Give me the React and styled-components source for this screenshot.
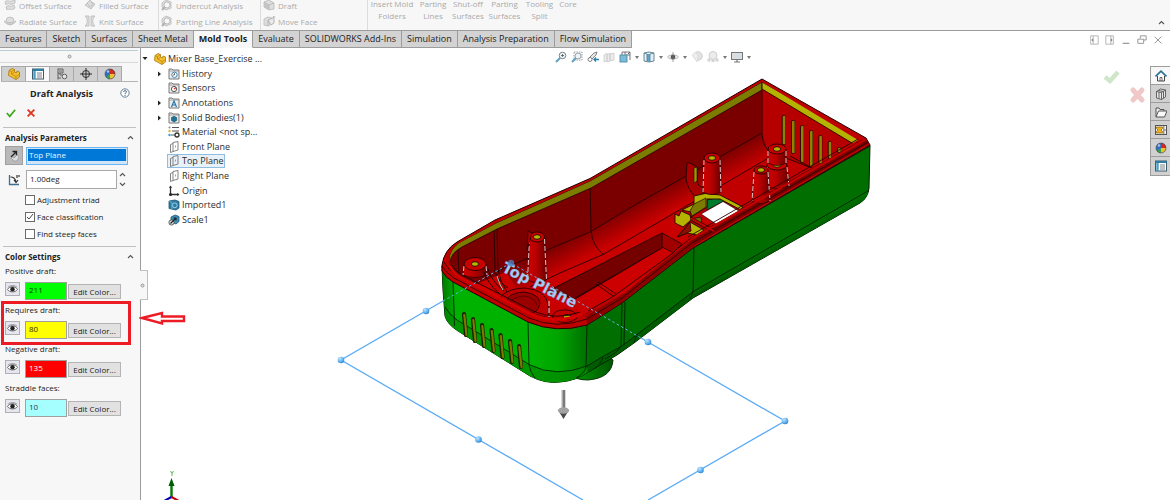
import React, { useState } from 'react';
import styled, { createGlobalStyle, css } from 'styled-components';

const GlobalStyle = createGlobalStyle`
  * {
    box-sizing: border-box;
  }

  body {
    margin: 0;
    background: #ffffff;
    color: #222222;
    font-family: 'Open Sans', 'Noto Sans', sans-serif;
    font-size: 8px;
    overflow: hidden;
  }

  button, input {
    font-family: inherit;
    font-size: inherit;
    color: inherit;
  }

  svg {
    display: block;
    flex: none;
  }
`;

const Page = styled.div`
  display: flex;
  flex-direction: column;
  height: 100vh;
`;

/* ---------- ribbon ---------- */

const Ribbon = styled.header`
  display: flex;
  align-items: flex-end;
  height: 31px;
  overflow: hidden;
  background: #f7f7f7;
  border-bottom: 1px solid #9c9c9c;
  color: #aaaaaa;
`;

const RibbonGroup = styled.div`
  display: grid;
  grid-template-columns: ${(props) => props.$cols};
  grid-auto-rows: 16px;
  height: 33px;
  padding-left: ${(props) => props.$pad || 2}px;
  border-right: 1px solid #dcdcdc;
`;

const RibbonButton = styled.button`
  display: flex;
  align-items: center;
  gap: 3px;
  padding: 0;
  border: none;
  background: none;
  white-space: nowrap;
`;

const BigTools = styled.div`
  display: flex;
  align-items: flex-start;
  align-self: flex-start;
`;

const BigTool = styled.button`
  display: flex;
  flex-direction: column;
  align-items: center;
  gap: 4px;
  width: ${(props) => props.$width}px;
  padding: 0;
  border: none;
  background: none;
  line-height: 8px;
  white-space: nowrap;
`;

const RibbonToggle = styled.button`
  margin: 0 5px 5px auto;
  padding: 0;
  border: none;
  background: none;
`;

/* ---------- command tabs ---------- */

const TabBar = styled.nav`
  display: flex;
  justify-content: space-between;
  height: 17px;
`;

const TabList = styled.div`
  display: flex;
`;

const Tab = styled.button`
  padding: 0 5px;
  border: none;
  border-right: 1px solid #9c9c9c;
  border-bottom: 1px solid #9c9c9c;
  background: #d3d3d3;
  font-size: 9px;
  line-height: 16px;
  white-space: nowrap;

  ${(props) => props.$active && css`
    border-bottom-color: #f7f7f7;
    background: #f7f7f7;
    font-weight: 700;
  `}
`;

const WindowControls = styled.div`
  display: flex;
  align-items: center;
  gap: 6px;
  padding-right: 7px;
`;

const PlainButton = styled.button`
  padding: 0;
  border: none;
  background: none;
`;

/* ---------- property manager ---------- */

const Main = styled.main`
  display: flex;
  flex: 1;
  min-height: 0;
`;

const Panel = styled.aside`
  position: relative;
  z-index: 2;
  flex: none;
  width: 141px;
  border-right: 1px solid #9c9c9c;
  background: #f7f7f7;
`;

const Grip = styled.div`
  display: flex;
  align-items: center;
  justify-content: center;
  height: 13px;
  margin: 2px 2px 0 0;
  border-top: 1px solid #b9cdd2;
  border-bottom: 1px solid #d8d8d8;
`;

const PanelTabs = styled.div`
  display: flex;
  margin: 3px 2px 0 1px;
  border-bottom: 1px solid #b4b4b4;
`;

const PanelTab = styled.button`
  display: flex;
  align-items: center;
  justify-content: center;
  width: 25px;
  height: 15px;
  margin-right: -1px;
  padding: 0;
  border: 1px solid #a8a8a8;
  border-bottom: none;
  background: ${(props) => (props.$active ? '#f9f9f9' : '#cfcfcf')};
`;

const TitleRow = styled.div`
  display: flex;
  align-items: center;
  height: 22px;
  padding: 0 10px 0 30px;
`;

const Title = styled.h1`
  flex: 1;
  margin: 0;
  font-size: 9px;
`;

const ConfirmRow = styled.div`
  display: flex;
  align-items: center;
  gap: 10px;
  height: 18px;
  padding-left: 6px;
`;

const Section = styled.section`
  margin: ${(props) => props.$top}px 4px 0 3px;
  border-top: 1px solid #c0c0c0;
`;

const SectionTitle = styled.h2`
  display: flex;
  align-items: center;
  justify-content: space-between;
  height: 18px;
  margin: 0;
  padding: 0 2px;
  font-size: 8px;
`;

const ParamRow = styled.div`
  display: flex;
  align-items: center;
  height: 19px;
  margin-bottom: ${(props) => props.$gap}px;
  padding: 0 8px 0 2px;
`;

const IconCell = styled.label`
  display: flex;
  align-items: center;
  justify-content: center;
  width: 18px;
  height: 19px;
  margin-right: 3px;
  border: 1px solid ${(props) => (props.$pressed ? '#a0a0a0' : 'transparent')};
  background: ${(props) => (props.$pressed ? '#b9b9b9' : 'none')};
`;

const SelectionBox = styled.div`
  display: flex;
  flex: 1;
  height: 18px;
  border: 1px solid #6db5f0;
  background: #cfe4f7;
  padding: 1px 1px 3px;
`;

const SelectionInput = styled.input`
  width: 100%;
  padding: 0 1px;
  border: none;
  background: #0078d7;
  color: #e8f3fd;
`;

const AngleInput = styled.input`
  flex: 1;
  width: 0;
  height: 19px;
  padding: 0 3px 3px;
  border: 1px solid #a8a8a8;
  background: #ffffff;
`;

const Spinner = styled.div`
  display: flex;
  flex-direction: column;
  align-items: center;
  justify-content: space-between;
  width: 11px;
  height: 15px;
`;

const CheckLabel = styled.label`
  display: flex;
  align-items: center;
  gap: 2px;
  height: 17px;
  padding-left: 22px;
`;

const CheckBox = styled.input`
  appearance: none;
  width: 10px;
  height: 10px;
  margin: 0;
  border: 1px solid #6a6a6a;
  background: #ffffff;

  &:checked {
    background: #ffffff url("data:image/svg+xml,%3Csvg xmlns='http://www.w3.org/2000/svg' viewBox='0 0 8 8'%3E%3Cpath d='M1 4l2 2 4-5' fill='none' stroke='%23444'/%3E%3C/svg%3E");
  }
`;

const ColorBlock = styled.div`
  position: relative;
  height: 39px;
  padding-left: 2px;
`;

const ColorLabel = styled.label`
  display: block;
  height: 17px;
  line-height: 12px;
`;

const ColorRow = styled.div`
  display: flex;
  align-items: flex-start;
`;

const EyeButton = styled.button`
  display: flex;
  align-items: center;
  justify-content: center;
  width: 15px;
  height: 14px;
  margin-right: 5px;
  padding: 0;
  border: 1px solid #b0b0b4;
  background: #e6e6ee;
`;

const Swatch = styled.input`
  width: 42px;
  height: 18px;
  margin-right: 1px;
  padding: 0 3px 4px;
  border: 1px solid #a0a0a0;
  background: ${(props) => props.$color};
  color: ${(props) => props.$ink};
`;

const EditButton = styled.button`
  width: 53px;
  height: 15px;
  margin-top: 2px;
  padding: 0;
  border: 1px solid #b4b4b4;
  background: #e1e1e1;
  line-height: 13px;
  white-space: nowrap;
`;

const Highlight = styled.div`
  position: absolute;
  top: -3px;
  left: -2px;
  width: 130px;
  height: 44px;
  border: 3px solid #ed1c24;
  pointer-events: none;
`;

const Pointer = styled.svg`
  position: absolute;
  top: 6px;
  left: 136px;
`;

const Flyout = styled.button`
  position: absolute;
  top: 222px;
  left: 140px;
  width: 8px;
  height: 30px;
  padding: 0;
  border: 1px solid #c0c0c0;
  border-left: none;
  background: #f7f7f7;
`;

/* ---------- graphics area ---------- */

const Viewport = styled.section`
  position: relative;
  flex: 1;
  min-width: 0;
`;

const Scene = styled.svg`
  position: absolute;
  top: 0;
  left: 0;
  width: 100%;
  height: 100%;
`;

const Overlay = styled.div`
  position: relative;
  display: grid;
  grid-template-columns: 1fr auto 1fr;
  align-items: start;
`;

const Tree = styled.ul`
  display: grid;
  grid-auto-rows: 1fr;
  justify-items: start;
  height: 175px;
  margin: 4px 0 0;
  padding: 0 0 0 1px;
  list-style: none;
  color: #2c2c2c;
  font-size: 9px;
  line-height: 12px;
`;

const TreeItem = styled.li`
  display: flex;
  align-items: center;
  margin-left: ${(props) => (props.$root ? 0 : 14)}px;
  white-space: nowrap;
`;

const TreeArrow = styled.span`
  display: flex;
  width: 11px;
`;

const TreeNode = styled.span`
  display: flex;
  align-items: center;
  gap: 2px;
  height: 14px;
  padding-right: 1px;
  border: 1px solid ${(props) => (props.$selected ? '#8fbde2' : 'transparent')};
  background: ${(props) => (props.$selected ? '#e9f1f8' : 'none')};
`;

const HeadsUp = styled.div`
  display: flex;
  align-items: center;
  gap: 4px;
  padding: 3px 5px 0 0;
`;

const RightSide = styled.div`
  display: flex;
  align-items: flex-start;
  justify-content: flex-end;
`;

const TaskPane = styled.div`
  display: flex;
  flex-direction: column;
  width: 20px;
  margin: 18px 0 0 5px;
  border: 1px solid #9c9c9c;
  border-right: none;
`;

const TaskButton = styled.button`
  display: flex;
  align-items: center;
  justify-content: center;
  height: 18px;
  padding: 0;
  border: none;
  border-bottom: 1px solid #9c9c9c;
  background: ${(props) => (props.$active ? '#f7f7f7' : '#d0d0d0')};

  &:last-child {
    border-bottom: none;
  }
`;

/* ---------- icons ---------- */

const Icon = ({ size = 12, children }) => (
  <svg width={size} height={size} viewBox="0 0 12 12" fill="none" aria-hidden="true">
    {children}
  </svg>
);

const gray = { stroke: '#bdbdbd', fill: '#dedede', strokeWidth: 0.9 };

const ribbonIcons = {
  offset: (
    <Icon>
      <path d="M1 3c2-3 4 1 10-2v3C7 7 4 3 2 6z" {...gray} />
      <path d="M2 8c3-3 4 1 8-2l1 3c-3 3-6 0-8 2z" {...gray} />
    </Icon>
  ),
  radiate: (
    <Icon>
      <circle cx="6" cy="6" r="4" {...gray} />
      <path d="M0 6c2 2 10 2 12 0-1 4-11 4-12 0z" {...gray} />
    </Icon>
  ),
  filled: (
    <Icon>
      <path d="M1 6l5-4 5 3-4 5z" {...gray} />
      <path d="M3 4l3-3 3 5-3 2z" {...gray} />
    </Icon>
  ),
  knit: (
    <Icon>
      <path d="M1 1c3 2 3 8 0 10h4V1zM11 1c-3 2-3 8 0 10H7V1z" {...gray} />
    </Icon>
  ),
  undercut: (
    <Icon>
      <path d="M1 4l4-3 5 2v6l-5 2-4-3z" {...gray} />
      <circle cx="6" cy="6" r="3" fill="#f7f7f7" stroke="#bdbdbd" />
      <path d="M4 8l-3 3" stroke="#b0b0b0" strokeWidth="2" />
    </Icon>
  ),
  draft: (
    <Icon>
      <path d="M1 3l5-2 5 3v6l-5 1-5-3z" {...gray} />
      <path d="M1 3l5 3v5l-5-3z" fill="#c4c4c4" />
      <path d="M1 3l5 3v5M6 6l5-2" stroke="#bdbdbd" />
    </Icon>
  ),
  moveFace: (
    <Icon>
      <path d="M1 4l4-2 4 1v6l-4 2-4-1z" {...gray} />
      <path d="M5 5v6M5 5l5-2 1-2v7l-3 2z" stroke="#b4b4b4" fill="#ebebeb" />
    </Icon>
  ),
};

const PartIcon = () => (
  <Icon>
    <path d="M1 2.500L4 0.500l2.500 1v2.500l2 1 0.500-2 2.500 1V9L8 11.500 0.500 7.500z" fill="#f5c02c" stroke="#a87912" strokeWidth="0.800" />
    <path d="M1 2.500l2.500 1.200L6.500 1.500M3.500 3.700V6L8 8.500v3M8 8.500l3.500-2M6.500 4L4 6" stroke="#b07f12" strokeWidth="0.700" />
  </Icon>
);

const ListIcon = () => (
  <Icon>
    <rect x="0.500" y="1" width="11" height="10" fill="#ffffff" stroke="#3d5a6b" />
    <path d="M0.500 2h11" stroke="#2f7fa3" strokeWidth="2" />
    <path d="M2.500 3v8" stroke="#4aa0c4" strokeWidth="2.400" />
    <path d="M5 5h5M5 7h5M5 9h5" stroke="#59636a" strokeWidth="0.800" />
  </Icon>
);

const ConfigIcon = () => (
  <Icon>
    <path d="M2 0.500v11M2 1h5v4H2M4 5v2h4M2 10h3" stroke="#5f5f5f" />
    <path d="M3 2h3v2H3z" fill="#9a9a9a" />
    <circle cx="8.500" cy="8.500" r="2.300" fill="#e4e4e4" stroke="#5f5f5f" />
  </Icon>
);

const TargetIcon = () => (
  <Icon>
    <circle cx="6" cy="6" r="3.500" stroke="#2b2b2b" />
    <path d="M6 0v12M0 6h12" stroke="#2b2b2b" />
  </Icon>
);

const BallIcon = () => (
  <Icon>
    <circle cx="6" cy="6" r="5" fill="#2d6fc4" />
    <path d="M6 6V1a5 5 0 0 1 5 5z" fill="#d62a20" />
    <path d="M6 6h5a5 5 0 0 1-5 5z" fill="#f1c232" />
    <path d="M6 6v5a5 5 0 0 1-4-2z" fill="#36a44a" />
    <circle cx="6" cy="6" r="5" stroke="#444" strokeWidth="0.6" />
    <circle cx="4" cy="3.500" r="1.200" fill="#ffffff" opacity="0.6" />
  </Icon>
);

const Chevron = ({ down }) => (
  <svg width="7" height="5" viewBox="0 0 7 5" fill="none" aria-hidden="true">
    <path d={down ? 'M1 1l2.500 2.500L6 1' : 'M1 4l2.500-2.500L6 4'} stroke="#555" strokeWidth="1.100" />
  </svg>
);

const EyeIcon = () => (
  <Icon size={11}>
    <path d="M0.500 6C3 2 9 2 11.500 6 9 9.500 3 9.500 0.500 6z" fill="#fff" stroke="#4a4a4a" strokeWidth="0.9" />
    <circle cx="6" cy="5.800" r="2.400" fill="#222" />
    <path d="M1 3.500C4 1 8 1 11 3.500" stroke="#777" strokeWidth="0.7" />
  </Icon>
);

const FolderIcon = ({ children }) => (
  <Icon>
    <path d="M1 11V1h3l1 1h6v9z" fill="#ececec" stroke="#6b6b6b" strokeWidth="0.9" />
    <path d="M1 3h10" stroke="#8a8a8a" strokeWidth="0.7" />
    {children}
  </Icon>
);

const PlaneIcon = () => (
  <Icon>
    <path d="M5 2.500l-2.500 1v8l2.500-1M5 1.500l5-1v8.500l-5 1.500z" stroke="#666" strokeWidth="0.800" />
    <path d="M7.500 4.500v2" stroke="#888" strokeWidth="0.800" />
  </Icon>
);

const treeIcons = {
  part: <PartIcon />,
  history: (
    <FolderIcon>
      <circle cx="6.500" cy="6.800" r="2.700" stroke="#3f86ad" fill="#fff" />
      <path d="M6.500 5v2H5" stroke="#333" strokeWidth="0.7" />
    </FolderIcon>
  ),
  sensors: (
    <FolderIcon>
      <circle cx="6" cy="7" r="2.600" stroke="#555" fill="#fff" />
      <path d="M6 7l2-1.500" stroke="#d8321f" strokeWidth="1.400" />
    </FolderIcon>
  ),
  annotations: (
    <FolderIcon>
      <path d="M3.500 10L6 4l2.500 6M4.500 8h3" stroke="#2378a8" strokeWidth="1.200" />
    </FolderIcon>
  ),
  bodies: (
    <FolderIcon>
      <path d="M3.500 5.500L6 4.300l2.700 1.200v3L6 10 3.500 8.500z" fill="#1d7396" stroke="#124c63" strokeWidth="0.6" />
    </FolderIcon>
  ),
  material: (
    <Icon>
      <path d="M4 1.500h7M4 5h7M3 9h5" stroke="#555" strokeWidth="1.200" />
      <circle cx="1.500" cy="1.500" r="1" fill="#888" />
      <circle cx="1.500" cy="5" r="1.200" fill="#e3b62d" />
      <circle cx="1.500" cy="9" r="1.200" fill="#3d9dcb" />
      <circle cx="9" cy="9" r="2" fill="#fff" stroke="#333" strokeWidth="1.300" />
    </Icon>
  ),
  plane: <PlaneIcon />,
  origin: (
    <Icon>
      <path d="M2.500 1v8.500H11" stroke="#333" strokeWidth="1.300" />
      <path d="M1 3l1.500-2.500L4 3zM9 8l2.500 1.500L9 11z" fill="#333" />
      <circle cx="2.500" cy="9.500" r="1.500" fill="#222" />
    </Icon>
  ),
  imported: (
    <Icon>
      <path d="M1 2l6-1 4 1.500V9L8 11 1 9.500z" fill="#2c7da3" stroke="#1b5672" strokeWidth="0.8" />
      <circle cx="6.800" cy="6.300" r="2.400" stroke="#a7d8ec" strokeWidth="0.9" />
      <path d="M1 2l3 1.500V10" stroke="#7bbcd8" strokeWidth="0.8" />
    </Icon>
  ),
  scale: (
    <Icon>
      <path d="M3 3l4-2 4 1.500v5L8 10 3 8z" fill="#3e8fb5" stroke="#1b5672" strokeWidth="0.8" />
      <circle cx="3.500" cy="8.500" r="2.600" fill="#d8d8d8" stroke="#444" strokeWidth="0.8" />
      <path d="M2.500 9.500L8 4M5.500 4H8v2.500" stroke="#222" strokeWidth="1.100" />
    </Icon>
  ),
};

const hudIcons = [
  { name: 'Zoom to Fit', art: (
    <>
      <circle cx="7.500" cy="4.500" r="3.300" fill="#edf4f8" stroke="#7b868d" />
      <path d="M5 7l-4 4" stroke="#5f9fc4" strokeWidth="2" />
      <path d="M6 4.500h3M7.500 3v3" stroke="#555" strokeWidth="0.8" />
    </>
  ) },
  { name: 'Zoom to Area', art: (
    <>
      <rect x="3" y="1" width="8" height="8" stroke="#8a8a8a" strokeDasharray="1.5 1" strokeWidth="0.8" />
      <circle cx="7" cy="5" r="3" fill="#edf4f8" stroke="#9aa4aa" />
      <path d="M5 7l-4 4" stroke="#5f9fc4" strokeWidth="2" />
    </>
  ) },
  { name: 'Previous View', art: (
    <>
      <path d="M1 8l6-6 3-1-1 3-6 6z" fill="#e6e6e6" stroke="#777" strokeWidth="0.9" />
      <circle cx="3" cy="8.500" r="2" fill="#fff" stroke="#777" strokeWidth="0.9" />
      <path d="M12 8.500H7M9 6.500L7 8.500l2 2" stroke="#2c7fb0" strokeWidth="1.300" />
    </>
  ) },
  { name: 'Section View', art: (
    <path d="M1 4l3-2v8l-3 1zM4 4l3-2v8l-3 1zM7 3l4-1v7l-4 1z" fill="#ebebeb" stroke="#cccccc" strokeWidth="0.8" />
  ) },
  { name: 'View Orientation', arrow: true, art: (
    <>
      <path d="M3 1h8v8M6 1v3M3 1v3M11 4H7" stroke="#666" strokeWidth="0.9" />
      <path d="M9 3l2-2" stroke="#666" />
      <rect x="1" y="4" width="7" height="7" fill="#7dbbdb" stroke="#4f8aa9" strokeWidth="0.9" />
    </>
  ) },
  { name: 'Display Style', arrow: true, art: (
    <>
      <path d="M1 2l5-1 5 1v8l-5 1-5-1z" fill="#e1f0f7" stroke="#5a7a89" strokeWidth="0.9" />
      <path d="M4 3h3v8l-3-0.500z" fill="#5ea4c8" />
      <path d="M1 2l3 1v7.500M7 3l4-1M7 3v8" stroke="#5a7a89" strokeWidth="0.8" />
    </>
  ) },
  { name: 'Hide/Show Items', arrow: true, art: (
    <>
      <path d="M0.500 6C3 3 9 3 11.500 6 9 9 3 9 0.500 6z" fill="#ececec" stroke="#aaa" strokeWidth="0.8" />
      <circle cx="6" cy="6" r="2.300" fill="#555" />
      <path d="M6 1v10" stroke="#777" strokeWidth="0.7" />
    </>
  ) },
  { name: 'Edit Appearance', art: (
    <>
      <circle cx="7" cy="5" r="4.300" fill="#e3e3e3" stroke="#d0d0d0" />
      <path d="M1 4l4-3 2 4-1 6z" fill="#eeeeee" stroke="#d5d5d5" strokeWidth="0.7" />
    </>
  ) },
  { name: 'Apply Scene', arrow: true, art: (
    <>
      <circle cx="6" cy="4.500" r="4" fill="#ebebeb" stroke="#cfcfcf" />
      <path d="M0.500 7.500h3v3h-3zM4.500 8h3v3h-3zM8.500 7.500h3v3h-3z" fill="#d2d2d2" />
    </>
  ) },
  { name: 'View Settings', arrow: true, art: (
    <>
      <rect x="0.500" y="1.500" width="11" height="7" fill="#d8dee2" stroke="#777" />
      <path d="M3 11h6M6 9v2" stroke="#777" strokeWidth="1.200" />
    </>
  ) },
];

const taskIcons = [
  { name: 'Resources', art: (
    <>
      <path d="M2.500 6v5h7V6" fill="#fff" stroke="#444" />
      <path d="M5 11V7.500h2V11" stroke="#444" strokeWidth="0.8" />
      <path d="M0.500 6.500L6 1.200l5.500 5.300" stroke="#2b6e93" strokeWidth="1.700" />
    </>
  ) },
  { name: 'Design Library', art: (
    <>
      <path d="M1.500 3.500l4-2.500 5 1v7l-4 2.500-5-1.500z" fill="#e8e8e8" stroke="#555" strokeWidth="0.900" />
      <path d="M1.500 3.500l5 1v7M6.500 4.500l4-2.500M4 4v6.500M8.500 3.500V10M3.500 2.500l5 1" stroke="#555" strokeWidth="0.900" />
    </>
  ) },
  { name: 'File Explorer', art: (
    <>
      <path d="M1 11V2h3l1 1.500h4V5" fill="#eee" stroke="#555" />
      <path d="M1 11l2.500-6H12l-2.500 6z" fill="#fafafa" stroke="#555" />
    </>
  ) },
  { name: 'View Palette', art: (
    <>
      <rect x="0.500" y="1.500" width="11" height="9" fill="#f4f4f4" stroke="#555" />
      <path d="M1.500 3h6v1.500L6 6l1.500 1.500V9h-6V7.500L3 6 1.500 4.500z" fill="#eab01e" stroke="#86620c" strokeWidth="0.700" />
      <path d="M8.800 2v8.500M8.800 6H11" stroke="#555" strokeWidth="0.800" />
    </>
  ) },
];

/* ---------- data ---------- */

const tabs = ['Features', 'Sketch', 'Surfaces', 'Sheet Metal', 'Mold Tools', 'Evaluate',
  'SOLIDWORKS Add-Ins', 'Simulation', 'Analysis Preparation', 'Flow Simulation'];

const bigTools = [
  { lines: ['Insert Mold', 'Folders'], width: 48 },
  { lines: ['Parting', 'Lines'], width: 34 },
  { lines: ['Shut-off', 'Surfaces'], width: 36 },
  { lines: ['Parting', 'Surfaces'], width: 37 },
  { lines: ['Tooling', 'Split'], width: 33 },
  { lines: ['Core'], width: 24 },
];

const treeItems = [
  { label: 'Mixer Base_Exercise ...', icon: 'part', arrow: 'open', root: true },
  { label: 'History', icon: 'history', arrow: 'closed' },
  { label: 'Sensors', icon: 'sensors' },
  { label: 'Annotations', icon: 'annotations', arrow: 'closed' },
  { label: 'Solid Bodies(1)', icon: 'bodies', arrow: 'closed' },
  { label: 'Material <not sp...', icon: 'material' },
  { label: 'Front Plane', icon: 'plane' },
  { label: 'Top Plane', icon: 'plane', selected: true },
  { label: 'Right Plane', icon: 'plane' },
  { label: 'Origin', icon: 'origin' },
  { label: 'Imported1', icon: 'imported' },
  { label: 'Scale1', icon: 'scale' },
];

const drafts = [
  { id: 'positive', label: 'Positive draft:', count: 211, color: '#00ff00', ink: '#003c00' },
  { id: 'requires', label: 'Requires draft:', count: 80, color: '#ffff00', ink: '#2c2c00', marked: true },
  { id: 'negative', label: 'Negative draft:', count: 135, color: '#ff0000', ink: '#ffffff' },
  { id: 'straddle', label: 'Straddle faces:', count: 10, color: '#a6ffff', ink: '#1c3c3c' },
];

/* ---------- model drawing ---------- */

function Boss({ x, y, rx, ry, bottom, spread = 2 }) {
  return (
    <g>
      <path
        d={`M${x - rx} ${y}L${x - rx - spread} ${bottom}Q${x} ${bottom + 5} ${x + rx + spread} ${bottom}L${x + rx} ${y}z`}
        fill="url(#bossSide)"
        stroke="#250000"
        strokeWidth="0.7"
      />
      <path
        d={`M${x - rx} ${y + 2}L${x - rx - spread} ${bottom}M${x + rx} ${y + 2}L${x + rx + spread} ${bottom}`}
        stroke="#f4dada"
        strokeWidth="0.9"
        strokeDasharray="5 2"
      />
      <ellipse cx={x} cy={y} rx={rx} ry={ry} fill="#c80000" stroke="#250000" strokeWidth="0.9" />
      <ellipse cx={x} cy={y} rx="3.600" ry="2.300" fill="#b4b400" stroke="#250000" strokeWidth="0.9" />
    </g>
  );
}

const backSlots = [
  [783.7, 117, 143], [793, 122, 152], [802, 127, 161], [811, 132, 165],
  [820.3, 137, 162], [829.7, 143, 157], [839, 149, 151],
];

const frontSlots = [
  [464, 314, 335], [473, 319, 341], [482, 325, 346], [491.500, 330, 351],
  [500.500, 335, 357], [510, 341, 362], [519, 346, 367],
];

const handles = [[426, 311], [341, 360], [478.500, 439.500], [648, 342], [785, 421], [700.500, 470]];

function Model() {
  return (
    <Scene viewBox="141 48 1029 452" preserveAspectRatio="xMinYMin meet" fill="none" role="img" aria-label="Mixer base">
      <defs>
        <linearGradient id="bossSide" x1="0" x2="1">
          <stop offset="0" stopColor="#d00000" />
          <stop offset="0.45" stopColor="#b80000" />
          <stop offset="1" stopColor="#6a0000" />
        </linearGradient>
        <linearGradient id="corner" gradientUnits="userSpaceOnUse" x1="528" y1="0" x2="588" y2="0">
          <stop offset="0" stopColor="#00b400" />
          <stop offset="0.5" stopColor="#00a400" />
          <stop offset="1" stopColor="#006e00" />
        </linearGradient>
        <linearGradient id="leftCorner" gradientUnits="userSpaceOnUse" x1="442" y1="0" x2="456" y2="0">
          <stop offset="0" stopColor="#007800" />
          <stop offset="1" stopColor="#00b200" />
        </linearGradient>
        <linearGradient id="fillet" gradientUnits="userSpaceOnUse" x1="640" y1="200" x2="652" y2="222">
          <stop offset="0" stopColor="#7c0000" />
          <stop offset="1" stopColor="#c80000" />
        </linearGradient>
        <linearGradient id="underside" gradientUnits="userSpaceOnUse" x1="770" y1="244" x2="777" y2="257">
          <stop offset="0" stopColor="#007400" />
          <stop offset="0.5" stopColor="#006000" />
          <stop offset="1" stopColor="#003a00" />
        </linearGradient>
        <linearGradient id="footSide" x1="0" x2="1">
          <stop offset="0" stopColor="#00a000" />
          <stop offset="1" stopColor="#005400" />
        </linearGradient>
        <radialGradient id="handle" cx="0.35" cy="0.3" r="0.8">
          <stop offset="0" stopColor="#c4e4ff" />
          <stop offset="0.6" stopColor="#5aaeee" />
          <stop offset="1" stopColor="#2878bd" />
        </radialGradient>
        <clipPath id="inside">
          <path d="M449 262C449 252 454 246 461 242L496 223 590 181 762 82 858 140 692 236 622 294 586 314Q566 327 536 318L458 276Q450 270 449 262z" />
        </clipPath>
      </defs>

      {/* foot under the front corner */}
      <path d="M570 374Q575 380 588 380 612 378 613 360L600 350z" fill="url(#footSide)" stroke="#002800" strokeWidth="0.900" />

      {/* outer shell */}
      <path d="M442 266L443 290 445 316Q447 324 458 331L530 376Q545 384 560 382 576 381 590 371L617 355 634 343 693 298 860 203Q868 198 869 188L870 145 762 90 500 240z" fill="#006e00" stroke="#001c00" />
      <path d="M442 268L443 290 445 316Q447 324 458 331L530 376 530 320 453 280z" fill="url(#leftCorner)" />
      <path d="M528 320L528 375Q545 384 560 382 576 381 588 372L587 324Q556 333 528 320z" fill="url(#corner)" />
      <path d="M445 307Q452 318 462 323L530 365Q556 378 587 366L588 372Q576 381 560 382 545 384 530 376L458 331Q447 324 445 316z" fill="#008a00" opacity="0.700" />
      <path d="M694 291L868 190Q868 198 860 203L693 298z" fill="url(#underside)" />
      <path d="M587 366L620 347 694 291 693 298 634 343 588 372z" fill="#005c00" />
      <path d="M445 307Q452 318 462 323L530 365Q556 378 587 366L602 357 622 346 694 291 868 191M453 282L454.500 326M528 322L529 365Q530 372 535 378M587 325L586 367Q584 374 576 378M622 304L621 346Q617 353 605 359M625 302L624 345M694 248L693 291Q692 296 690 299M603 357Q602 363 594 369M634 343L637 334" stroke="#002400" strokeWidth="0.900" />
      {frontSlots.map(([x, y1, y2]) => (
        <g key={x}>
          <path d={`M${x} ${y1}L${x + 2} ${y2}`} stroke="#1c2400" strokeWidth="4.200" strokeLinecap="round" />
          <path d={`M${x + 0.3} ${y1 + 1}L${x + 2.5} ${y2}`} stroke="#7c7800" strokeWidth="2.200" strokeLinecap="round" />
        </g>
      ))}

      {/* rim */}
      <path d="M442 271L442 265Q444 250 457 242L495 220 590 178.500 762 79 866 138 870 145 693 248 622 303 587 325Q556 334 528 322L453 282Q445 277 442 271z" fill="#c00000" stroke="#200000" />
      <path d="M867 140L869 145 693 247 692 240z" fill="#7c0000" />
      <path d="M692 240L693 247 622 302 587 324 586 316 621 295z" fill="#8c0000" />
      <path d="M442 266Q445 272 454 278L529 318Q556 330 587 319L622 298 692 243 868 142M444 262Q448 270 456 275L530 314Q556 326 584 315L620 294 691 238 862 140" stroke="#300000" strokeWidth="0.900" />

      {/* inside of the housing */}
      <g clipPath="url(#inside)">
        <path d="M440 220H880V340H440z" fill="#c80000" />
        <path d="M762 84L880 150 868 190 812 168 768 152 762 134z" fill="#b60000" />
        <path d="M440 235L762 70V134L640 202 590 232 547 250 505 272 440 300z" fill="#7a0000" />
        <path d="M762 133L640 202 590 232 547 250 505 270 520 295 560 273 604 254 640 233 770 157z" fill="url(#fillet)" />
        <path d="M762 133L640 202 590 232 547 250 495 272M770 157L640 233 604 254 560 273 530 287M770 152L812 168M762 84V134Q763 148 772 154M590 184L591 230Q592 246 604 255M494 226L495 270M497 225L498 270Q500 282 508 294M458 248L459 276" stroke="#250000" strokeWidth="0.900" />
        <path d="M449 262Q448 250 460 242L496 223 590 181 762 82V90L591 188 497 229 462 247Q451 253 450 262z" fill="#7c7c00" stroke="#250000" strokeWidth="0.800" />
        <path d="M762 82L864 140 857 146 762 89z" fill="#b4b400" stroke="#250000" strokeWidth="0.900" />
      </g>

      {backSlots.map(([x, y1, y2]) => (
        <g key={x}>
          <path d={`M${x} ${y1}V${y2}`} stroke="#300000" strokeWidth="4" strokeLinecap="round" />
          <path d={`M${x + 0.3} ${y1}V${y2}`} stroke="#8c8400" strokeWidth="2.600" strokeLinecap="round" />
        </g>
      ))}
      <path d="M790 156L812 168" stroke="#250000" strokeWidth="0.900" />

      {/* rectangular pocket along the front wall */}
      <path d="M662 233L662 248 575 299 548 291z" fill="#740000" stroke="#250000" strokeWidth="0.900" />
      <path d="M662 233L682 244 673 253 662 247z" fill="#a00000" stroke="#250000" strokeWidth="0.900" />
      <path d="M662 248L673 253 625 293 612 299 575 301z" fill="#cc0000" />
      <path d="M662 248L575 298M596 284L613 296M598 282L616 294M673 253L614 296 588 311" stroke="#250000" strokeWidth="0.900" />

      {/* hook, yellow ribs and the opening */}
      <path d="M687 163L690 163 697 167 697 182Q699 187 703 188V195L695 197Q687 188 686 178z" fill="#a80000" stroke="#250000" strokeWidth="0.900" />
      <path d="M694 168L697 167V181L694 183z" fill="#9a9a00" stroke="#250000" strokeWidth="0.600" />
      <path d="M707 200L720 197 724 201 707 210z" fill="#007a2c" stroke="#001c00" strokeWidth="0.700" />
      <path d="M701 214L723 201.500 739 211 716 224z" fill="#ffffff" stroke="#250000" strokeWidth="0.700" />
      <path d="M694 196L705 193.500 720 195 743 207 740 209.500 720 199 707 199 V207L691 217V212L682 210 694 204z" fill="#b4b400" stroke="#250000" strokeWidth="0.900" />
      <path d="M694 204L706 198V207L692 216 690 211z" fill="#7c7c00" stroke="#250000" strokeWidth="0.700" />
      <path d="M675 214L679 216 681 211 690 215 691 220 683 227 675 223z" fill="#b4b400" stroke="#250000" strokeWidth="0.900" />
      <path d="M691 219L701 217 702 226 695 222z" fill="#6a6a00" stroke="#250000" strokeWidth="0.700" />
      <path d="M677 237L690 222 704 230 697 235 687 233z" fill="#b4b400" stroke="#250000" strokeWidth="0.900" />
      <path d="M690 222L691 231 678 237z" fill="#8c1000" stroke="#250000" strokeWidth="0.800" />
      <path d="M691 218L714 231" stroke="#c80000" strokeWidth="2.200" />
      <path d="M691 217L715 230M690 220L712 232" stroke="#250000" strokeWidth="0.700" />

      {/* screw bosses */}
      <Boss x={777} y={165} rx={10} ry={5} bottom={186} spread={2} />
      <Boss x={777} y={149} rx={9} ry={5} bottom={163} spread={0} />
      <Boss x={761} y={170} rx={7} ry={4} bottom={201} />
      <Boss x={712} y={158} rx={8} ry={5} bottom={192} spread={1} />
      <Boss x={537} y={237} rx={7.5} ry={5} bottom={280} />
      <path d="M528 231L532 233 530 240 527 250z" fill="#a80000" stroke="#250000" strokeWidth="0.800" />
      <Boss x={475} y={264} rx={11} ry={6.5} bottom={275} spread={1} />

      {/* bearing seat and front boss */}
      <path d="M484 272Q488 284 500 294M488 269Q492 282 504 291M494 270Q500 284 508 288" stroke="#250000" />
      <path d="M497 276Q500 286 503 290" stroke="#8ad4c8" />
      <path d="M501 296Q510 288 525 288 546 290 548 304L549 318 530 313 502 299z" fill="#c00000" stroke="#250000" strokeWidth="0.900" />
      <path d="M507 301Q508 293 524 292 539 294 540 303 539 311 531 314z" fill="#9a0000" stroke="#250000" strokeWidth="0.900" />
      <path d="M509 303Q513 297 524 296 535 297 537 305" stroke="#500000" strokeWidth="0.800" />
      <path d="M549 301V317" stroke="#f4dada" strokeDasharray="5 2" />
      <path d="M552 317Q554 309 567 310 577 311 577 318 570 324 560 322z" fill="#c40000" stroke="#250000" strokeWidth="0.800" />
      <ellipse cx="567" cy="317" rx="4" ry="2.500" fill="#b4b400" stroke="#250000" />
      <path d="M450 266Q452 272 460 277L531 314Q556 325 582 314" stroke="#d80000" strokeWidth="2.500" />
      <path d="M452 265Q454 270 462 275L533 311Q556 321 580 312" stroke="#250000" strokeWidth="0.900" />

      {/* front lip edge on the long side */}
      <path d="M691 239L864 140" stroke="#c40000" strokeWidth="2" />
      <path d="M688 237L858 139M693 248L870 146" stroke="#300000" strokeWidth="0.900" />
      <path d="M694 246L869 144" stroke="#d80000" />

      {/* reference plane */}
      <path d="M443 301L511 263 641 338" stroke="#6db0ea" strokeDasharray="2.500 2.500" />
      <path d="M443 301L341 360 583 500M641 338L785 421 648 500" stroke="#5aaaf6" strokeWidth="1.300" />
      <text x="501" y="271" transform="rotate(27 501 271)" fill="#a4ccf6" stroke="#6a9ad2" strokeWidth="0.300" fontFamily="'DejaVu Sans', sans-serif" fontWeight="700" fontSize="15">Top Plane</text>
      <circle cx="511" cy="263" r="3.200" fill="#4b7ec0" opacity="0.800" />
      {handles.map(([x, y]) => (
        <circle key={x} cx={x} cy={y} r="3.300" fill="url(#handle)" />
      ))}

      {/* pull direction */}
      <path d="M563.500 390V410" stroke="#7a7a7a" strokeWidth="3.600" />
      <path d="M562.500 390V410" stroke="#adadad" />
      <path d="M558 410L563.500 419 569 410z" fill="#4a4a4a" />
      <ellipse cx="563.500" cy="410.500" rx="5.600" ry="3.200" fill="#a2a2a2" />

      {/* confirmation corner */}
      <path d="M1105 77L1110 81 1118 72" stroke="#cfe6c8" strokeWidth="4.500" />
      <path d="M1133 90L1142 100M1142 90L1133 100" stroke="#f0c8c8" strokeWidth="5" strokeLinecap="round" />

      {/* axis triad */}
      <path d="M170.500 471L172 473.500 173.500 471M172 473.500V476" stroke="#4cb04c" strokeWidth="0.900" />
      <path d="M171.500 497V484" stroke="#007a00" strokeWidth="2.400" />
      <path d="M168.500 486L171.500 478 174.500 486z" fill="#005c00" />
      <path d="M171.500 497L164 501" stroke="#0000b4" strokeWidth="2" />
      <path d="M171.500 497L179 501" stroke="#c80000" strokeWidth="2" />
    </Scene>
  );
}

/* ---------- page parts ---------- */

function CommandRibbon() {
  return (
    <Ribbon>
      <RibbonGroup $cols="80px 74px" $pad={4}>
        <RibbonButton>{ribbonIcons.offset}Offset Surface</RibbonButton>
        <RibbonButton>{ribbonIcons.filled}Filled Surface</RibbonButton>
        <RibbonButton>{ribbonIcons.radiate}Radiate Surface</RibbonButton>
        <RibbonButton>{ribbonIcons.knit} Knit Surface</RibbonButton>
      </RibbonGroup>
      <RibbonGroup $cols="99px" $pad={2}>
        <RibbonButton>{ribbonIcons.undercut}Undercut Analysis</RibbonButton>
        <RibbonButton>{ribbonIcons.undercut}Parting Line Analysis</RibbonButton>
      </RibbonGroup>
      <RibbonGroup $cols="104px">
        <RibbonButton>{ribbonIcons.draft}Draft</RibbonButton>
        <RibbonButton>{ribbonIcons.moveFace}Move Face</RibbonButton>
      </RibbonGroup>
      <BigTools>
        {bigTools.map((tool) => (
          <BigTool key={tool.lines.join(' ')} $width={tool.width}>
            {tool.lines.map((line) => <span key={line}>{line}</span>)}
          </BigTool>
        ))}
      </BigTools>
      <RibbonToggle aria-label="Collapse"><Chevron /></RibbonToggle>
    </Ribbon>
  );
}

function CommandTabs() {
  const [active, setActive] = useState('Mold Tools');

  return (
    <TabBar>
      <TabList>
        {tabs.map((tab) => (
          <Tab key={tab} $active={tab === active} onClick={() => setActive(tab)}>{tab}</Tab>
        ))}
      </TabList>
      <WindowControls>
        <PlainButton aria-label="Dock left">
          <Icon size={10}><path d="M2 1h9v10H2zM5 1v10" stroke="#aaa" /><path d="M5 4v4L3 6z" fill="#777" /></Icon>
        </PlainButton>
        <PlainButton aria-label="Dock right">
          <Icon size={10}><path d="M1 1h9v10H1zM7 1v10" stroke="#aaa" /><path d="M7 4v4l2-2z" fill="#777" /></Icon>
        </PlainButton>
        <PlainButton aria-label="Minimize">
          <Icon size={10}><path d="M2 10h8" stroke="#999" strokeWidth="1.500" /></Icon>
        </PlainButton>
        <PlainButton aria-label="Restore">
          <Icon size={10}><path d="M4 4V1h7v5H8M1 5h7v5H1z" stroke="#999" strokeWidth="1.200" /></Icon>
        </PlainButton>
        <PlainButton aria-label="Close">
          <Icon size={10}><path d="M2 2l8 8M10 2l-8 8" stroke="#999" strokeWidth="1.200" /></Icon>
        </PlainButton>
      </WindowControls>
    </TabBar>
  );
}

function ColorSetting({ draft }) {
  return (
    <ColorBlock>
      <ColorLabel htmlFor={draft.id}>{draft.label}</ColorLabel>
      <ColorRow>
        <EyeButton aria-label="Show or hide"><EyeIcon /></EyeButton>
        <Swatch id={draft.id} $color={draft.color} $ink={draft.ink} value={draft.count} readOnly />
        <EditButton>Edit Color...</EditButton>
      </ColorRow>
      {draft.marked && (
        <>
          <Highlight />
          <Pointer width="48" height="16" viewBox="0 0 48 16" fill="none">
            <path d="M3 8L23 3V6.500H45V11H23V13.500z" fill="#fff" stroke="#ed1c24" strokeWidth="2.400" />
          </Pointer>
        </>
      )}
    </ColorBlock>
  );
}

function PropertyPanel() {
  const [checks, setChecks] = useState({
    'Adjustment triad': false,
    'Face classification': true,
    'Find steep faces': false,
  });

  const toggle = (name) => setChecks({ ...checks, [name]: !checks[name] });

  return (
    <Panel>
      <Grip>
        <svg width="5" height="5" viewBox="0 0 5 5"><circle cx="2.500" cy="2.500" r="1.500" fill="#ddd" stroke="#999" /></svg>
      </Grip>
      <PanelTabs>
        <PanelTab aria-label="Feature tree"><PartIcon /></PanelTab>
        <PanelTab aria-label="Properties" $active><ListIcon /></PanelTab>
        <PanelTab aria-label="Configurations"><ConfigIcon /></PanelTab>
        <PanelTab aria-label="Dimensions"><TargetIcon /></PanelTab>
        <PanelTab aria-label="Display"><BallIcon /></PanelTab>
      </PanelTabs>
      <TitleRow>
        <Title>Draft Analysis</Title>
        <PlainButton aria-label="Help">
          <Icon size={10}>
            <circle cx="6" cy="6" r="5" stroke="#4d6680" fill="#fff" />
            <path d="M4.300 4.800C4.300 2.600 7.800 2.700 7.700 4.700 7.600 5.900 6 5.800 6 7.300M6 8.300v1.200" stroke="#33597f" strokeWidth="1.200" />
          </Icon>
        </PlainButton>
      </TitleRow>
      <ConfirmRow>
        <PlainButton aria-label="OK">
          <Icon size={10}><path d="M1 6l3.500 4L11 2" stroke="#3fa51f" strokeWidth="2" /></Icon>
        </PlainButton>
        <PlainButton aria-label="Cancel">
          <Icon size={10}><path d="M2 2l8 8M10 2l-8 8" stroke="#e2341d" strokeWidth="2.200" /></Icon>
        </PlainButton>
      </ConfirmRow>

      <Section $top={5}>
        <SectionTitle>Analysis Parameters<Chevron /></SectionTitle>
        <ParamRow $gap={5}>
          <IconCell htmlFor="direction" $pressed aria-label="Direction of pull">
            <Icon>
              <path d="M3 7l5-5M4.500 1.500H8.500V5.500" stroke="#222" strokeWidth="1.300" />
              <path d="M6 11L3 8l1-1 2 1 3-3 2 2-2 4z" fill="#ddd" stroke="#999" strokeWidth="0.800" />
            </Icon>
          </IconCell>
          <SelectionBox>
            <SelectionInput id="direction" value="Top Plane" readOnly />
          </SelectionBox>
        </ParamRow>
        <ParamRow $gap={2}>
          <IconCell htmlFor="angle" aria-label="Draft angle">
            <Icon>
              <path d="M1.500 1v9.500H11" stroke="#3d6f8f" strokeWidth="1.300" />
              <path d="M2.500 3Q7 3 8 8M6 6l2 2.500L10 6M9 1v3M11 1v2" stroke="#333" strokeWidth="1.200" />
            </Icon>
          </IconCell>
          <AngleInput id="angle" defaultValue="1.00deg" />
          <Spinner>
            <PlainButton aria-label="Increase"><Chevron /></PlainButton>
            <PlainButton aria-label="Decrease"><Chevron down /></PlainButton>
          </Spinner>
        </ParamRow>
        {Object.keys(checks).map((name) => (
          <CheckLabel key={name}>
            <CheckBox type="checkbox" checked={checks[name]} onChange={() => toggle(name)} />
            {name}
          </CheckLabel>
        ))}
      </Section>

      <Section $top={4}>
        <SectionTitle>Color Settings<Chevron /></SectionTitle>
        {drafts.map((draft) => <ColorSetting key={draft.id} draft={draft} />)}
      </Section>
      <Flyout aria-label="Collapse panel">
        <svg width="5" height="5" viewBox="0 0 5 5"><circle cx="2.500" cy="2.500" r="1.500" fill="#ddd" stroke="#999" /></svg>
      </Flyout>
    </Panel>
  );
}

function FeatureTree() {
  return (
    <Tree>
      {treeItems.map((item) => (
        <TreeItem key={item.label} $root={item.root}>
          <TreeArrow>
            {item.arrow && (
              <svg width="6" height="6" viewBox="0 0 6 6">
                <path d={item.arrow === 'open' ? 'M0.500 1h5L3 4z' : 'M2 0.500v5L5 3z'} fill="#222" />
              </svg>
            )}
          </TreeArrow>
          <TreeNode $selected={item.selected}>
            {treeIcons[item.icon]}
            {item.label}
          </TreeNode>
        </TreeItem>
      ))}
    </Tree>
  );
}

function GraphicsArea() {
  return (
    <Viewport>
      <Model />
      <Overlay>
        <FeatureTree />
        <HeadsUp>
          {hudIcons.map((tool) => (
            <React.Fragment key={tool.name}>
              <PlainButton aria-label={tool.name}><Icon>{tool.art}</Icon></PlainButton>
              {tool.arrow && (
                <svg width="4" height="3" viewBox="0 0 4 3"><path d="M0 0h4L2 3z" fill="#777" /></svg>
              )}
            </React.Fragment>
          ))}
        </HeadsUp>
        <RightSide>
          <TaskPane>
            {taskIcons.map((tool, i) => (
              <TaskButton key={tool.name} aria-label={tool.name} $active={i === 0}>
                <Icon>{tool.art}</Icon>
              </TaskButton>
            ))}
            <TaskButton aria-label="Appearances"><BallIcon /></TaskButton>
            <TaskButton aria-label="Custom Properties"><ListIcon /></TaskButton>
          </TaskPane>
        </RightSide>
      </Overlay>
    </Viewport>
  );
}

function App() {
  return (
    <>
      <GlobalStyle />
      <Page>
        <CommandRibbon />
        <CommandTabs />
        <Main>
          <PropertyPanel />
          <GraphicsArea />
        </Main>
      </Page>
    </>
  );
}

export default App;
